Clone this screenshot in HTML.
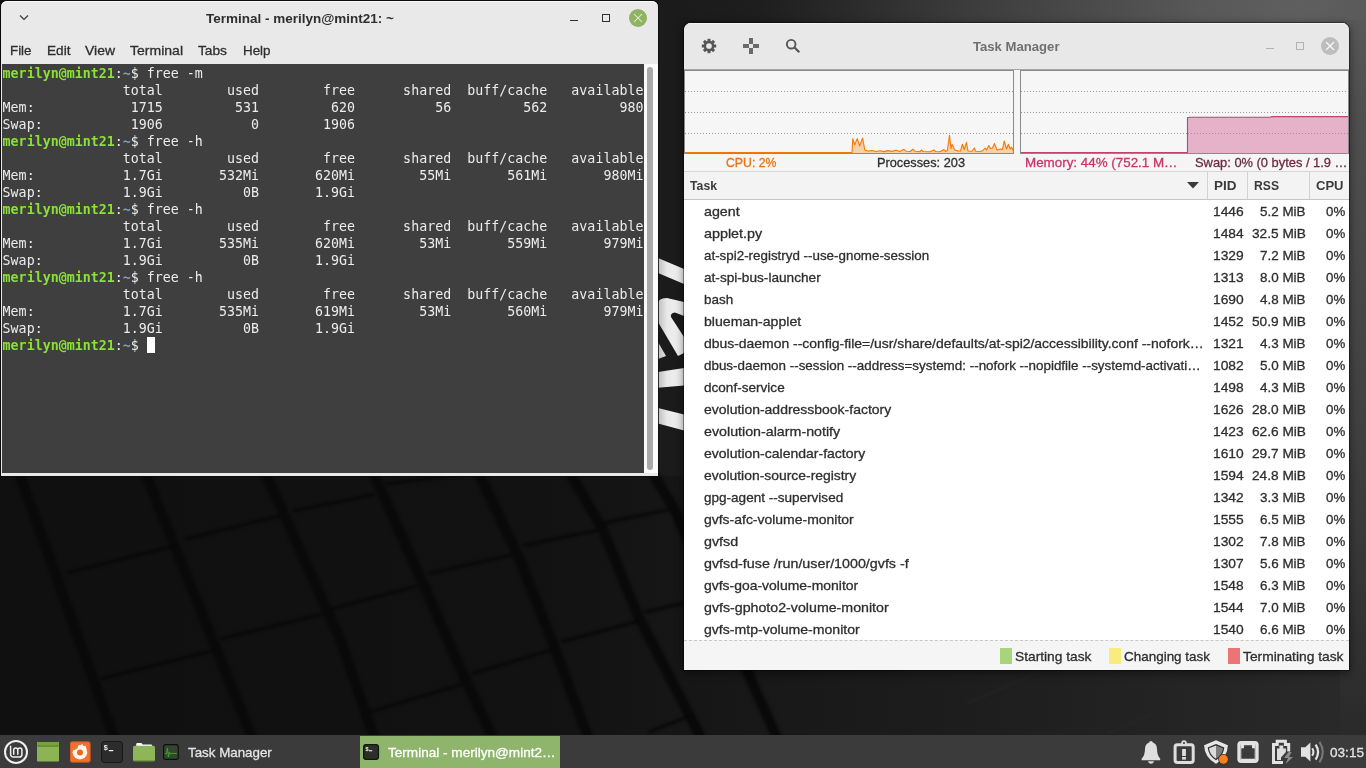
<!DOCTYPE html>
<html lang="en">
<head>
<meta charset="utf-8">
<title>Desktop</title>
<style>
*{box-sizing:border-box;margin:0;padding:0}
html,body{width:1366px;height:768px;overflow:hidden;background:#111}
body{position:relative;font-family:"Liberation Sans",sans-serif;font-size:14px;color:#2e2e2e}
.a{position:absolute}
.t{position:absolute;white-space:pre;line-height:1;transform-origin:0 0;-webkit-text-stroke:0.3px}
#txt{position:absolute;left:0;top:0;width:1366px;height:768px;will-change:transform}
#wall{position:absolute;left:0;top:0;width:1366px;height:768px}
#ico{position:absolute;left:0;top:0;width:1366px;height:768px;will-change:transform}
/* terminal window */
#term{position:absolute;left:1px;top:1px;width:657px;height:474.5px;background:#e9e9e9;border-radius:6px 6px 0 0;box-shadow:0 0 0 1px rgba(10,10,10,.8),inset 0 1px 0 #fafafa}
#tbg{position:absolute;left:2px;top:64px;width:642px;height:409px;background:#3f3f3f}
#tbody{position:absolute;left:2px;top:64px;width:642px;height:409px;will-change:transform;color:#ececec;font-family:"DejaVu Sans Mono","Liberation Mono",monospace;font-size:13.288px;line-height:17px;white-space:pre;padding:1.2px 0 0 0.6px;letter-spacing:0.024px;overflow:hidden}
#tbody b{color:#8ae234;font-weight:bold}
#tbody i{color:#7c9fc9;font-style:normal;font-weight:bold}
#tbody .cur{display:inline-block;width:8px;height:16px;background:#fff;vertical-align:top}
#tscroll{position:absolute;left:644px;top:64px;width:14px;height:409px;background:#fbfbfb}
#tscroll div{position:absolute;left:3px;top:3px;width:6px;height:403px;border-radius:3px;background:#a9a9a9}
/* task manager */
#tm{position:absolute;left:684px;top:23px;width:665px;height:647px;background:#f5f5f5;border-radius:7px 7px 0 0;overflow:hidden;box-shadow:0 0 0 1px rgba(0,0,0,.4),0 2px 9px 1px rgba(0,0,0,.45)}
#tm .hdr{position:absolute;left:0;top:0;width:100%;height:47px;background:#e8e8e8;border-bottom:1px solid #a6a6a6;box-shadow:inset 0 1px 0 #f6f6f6}
.graph{position:absolute;top:70px;height:84px;background:#f6f6f6;border:1px solid #8a8a8a}
#th{position:absolute;left:684px;top:171px;width:665px;height:29px;background:#f3f3f3;border-top:1px solid #d6d6d6;border-bottom:1px solid #c4c4c4}
.sep{position:absolute;top:172px;width:1px;height:27px;background:#d2d2d2}
#rows{position:absolute;left:684px;top:200px;width:665px;height:441px;background:#fff}
#ft{position:absolute;left:684px;top:640px;width:665px;height:30px;background:#f5f5f5;border-top:1px dashed #c8c8c8}
/* panel */
#panel{position:absolute;left:0;top:735px;width:1366px;height:33px;background:#3b3b3b}
</style>
</head>
<body>
<svg id="wall" viewBox="0 0 1366 768">
<defs>
<linearGradient id="gC" x1="658" x2="1366" y1="0" y2="0" gradientUnits="userSpaceOnUse">
<stop offset="0" stop-color="#1a1a1a"/><stop offset=".144" stop-color="#1e1e1e"/><stop offset=".285" stop-color="#2c2c2c"/><stop offset=".435" stop-color="#3c3c3c"/><stop offset=".624" stop-color="#4c4c4c"/><stop offset=".765" stop-color="#585858"/><stop offset=".907" stop-color="#5f5f5f"/><stop offset="1" stop-color="#5a5a5a"/>
</linearGradient>
<linearGradient id="gD" x1="0" x2="0" y1="0" y2="735" gradientUnits="userSpaceOnUse">
<stop offset="0" stop-color="#5a5a5a"/><stop offset=".136" stop-color="#505050"/><stop offset=".326" stop-color="#4a4a4a"/><stop offset=".544" stop-color="#424242"/><stop offset=".748" stop-color="#383838"/><stop offset=".925" stop-color="#2e2e2e"/><stop offset="1" stop-color="#2a2a2a"/>
</linearGradient>
<linearGradient id="gE" x1="0" x2="1366" y1="0" y2="0" gradientUnits="userSpaceOnUse">
<stop offset="0" stop-color="#101010"/><stop offset=".4" stop-color="#121212"/><stop offset=".5" stop-color="#161616"/><stop offset=".73" stop-color="#1e1e1e"/><stop offset="1" stop-color="#2a2a2a"/>
</linearGradient>
<linearGradient id="gS" x1="676" x2="684" y1="0" y2="0" gradientUnits="userSpaceOnUse">
<stop offset="0" stop-color="#000" stop-opacity="0"/><stop offset="1" stop-color="#000" stop-opacity=".45"/>
</linearGradient>
<filter id="bl" color-interpolation-filters="sRGB" x="0" y="0" width="1366" height="768" filterUnits="userSpaceOnUse"><feGaussianBlur stdDeviation="1.8"/></filter>
<linearGradient id="gL" x1="658" x2="684" y1="0" y2="0" gradientUnits="userSpaceOnUse">
<stop offset="0" stop-color="#bdbdbd"/><stop offset=".35" stop-color="#e9e9e9"/><stop offset="1" stop-color="#f4f4f4"/>
</linearGradient>
</defs>
<rect width="1366" height="768" fill="#111"/>
<rect x="0" y="0" width="1366" height="735" fill="url(#gE)"/>
<rect x="658" y="0" width="708" height="60" fill="url(#gC)"/>
<rect x="1340" y="20" width="26" height="715" fill="url(#gD)"/>
<rect x="658" y="0" width="26" height="476" fill="#1b1b1b"/>
<g filter="url(#bl)">
<g fill="none" stroke="#090909" stroke-width="10" stroke-linecap="butt" stroke-linejoin="round">
<path d="M18,470 L115,740"/><path d="M144,470 L253,740"/><path d="M264,470 L340,639 L375,740"/><path d="M372,470 L421,579 L463,674 L494,740"/><path d="M477,470 L516,551 L554,646 L589,740"/><path d="M568,470 L602,528 L639,618 L690,716 L702,740"/><path d="M651,470 L674,509 L760,700 L778,740"/>
</g>
<g fill="none" stroke="#080808" stroke-width="3">
<path d="M67,573 L177,545 M185,539 L279,516 M292,511 L375,494.6 M386,484 L477,472"/>
<path d="M100,679 L215,650 M220,639 L323,614 M331,609 L417,586 M428,573.6 L516,554 M523,545.5 L600,529.7 M605,522.7 L674,508.6"/>
<path d="M368,712.4 L463,684 M472,673.8 L554,649 M561,642 L639,621 M644,612.3 L690,601.8"/>
<path d="M649,731.8 L690,716"/>
</g>
<g fill="none" stroke="#2c2c2c" stroke-width="1.5" opacity=".6">
<path d="M966,704 L1039,672 M1109,733 L1153,714"/>
</g>
</g>
<g fill="url(#gL)">
<path d="M658,258 L684,269 L684,284 L658,273Z"/>
<path d="M658,302 Q660,298 667,298 L684,302 L684,316 L675,312.5 Q670,313 671,317 L684,337 L684,353 L678,356 L658,322Z"/>
<path d="M658,342 L666,356 L658,359Z"/>
<path d="M658,372 L684,368 L684,385.5 L658,387.7Z"/>
<path d="M658,408 L684,414.4 L684,430.5 L658,423.5Z"/>
</g>
</svg>

<div id="term"></div>
<div id="tbg"></div>
<div id="tbody"><b>merilyn@mint21</b>:<i>~</i>$ free -m
               total        used        free      shared  buff/cache   available
Mem:            1715         531         620          56         562         980
Swap:           1906           0        1906
<b>merilyn@mint21</b>:<i>~</i>$ free -h
               total        used        free      shared  buff/cache   available
Mem:           1.7Gi       532Mi       620Mi        55Mi       561Mi       980Mi
Swap:          1.9Gi          0B       1.9Gi
<b>merilyn@mint21</b>:<i>~</i>$ free -h
               total        used        free      shared  buff/cache   available
Mem:           1.7Gi       535Mi       620Mi        53Mi       559Mi       979Mi
Swap:          1.9Gi          0B       1.9Gi
<b>merilyn@mint21</b>:<i>~</i>$ free -h
               total        used        free      shared  buff/cache   available
Mem:           1.7Gi       535Mi       619Mi        53Mi       560Mi       979Mi
Swap:          1.9Gi          0B       1.9Gi
<b>merilyn@mint21</b>:<i>~</i>$ <span class="cur"></span></div>
<div id="tscroll"><div></div></div>

<div id="tm"><div class="hdr"></div></div>
<div class="graph" style="left:684px;width:330px"></div>
<div class="graph" style="left:1020px;width:329px"></div>
<div id="th"></div>
<div class="sep" style="left:1207px"></div><div class="sep" style="left:1247px"></div><div class="sep" style="left:1309px"></div>
<div id="rows"></div>
<div id="ft"></div>
<div class="a" style="left:1000px;top:648px;width:12px;height:16px;background:#a8d47d"></div>
<div class="a" style="left:1109px;top:648px;width:12px;height:16px;background:#f9ec7c"></div>
<div class="a" style="left:1228px;top:648px;width:12px;height:16px;background:#ec7474"></div>

<div id="panel"></div>
<div class="a" style="left:360px;top:736px;width:200px;height:32px;background:#8fb46b"></div>

<svg id="ico" viewBox="0 0 1366 768">
<!-- terminal window controls -->
<path d="M20,15.5 L24,19.5 L28,15.5" fill="none" stroke="#3a3a3a" stroke-width="1.2"/>
<rect x="570" y="20" width="8" height="1" fill="#303030"/>
<rect x="602.5" y="14.5" width="7" height="7" fill="none" stroke="#303030" stroke-width="1"/>
<circle cx="638" cy="18" r="9" fill="#8fb264"/>
<path d="M634,14 L642,22 M642,14 L634,22" stroke="#e6f5d6" stroke-width="1.05" fill="none"/>
<!-- task manager header icons -->
<g transform="translate(709,46)" fill="#555">
<g transform="rotate(0)"><rect x="-1.5" y="-7.2" width="3" height="3.4"/><rect x="-1.5" y="3.8" width="3" height="3.4"/></g><g transform="rotate(45)"><rect x="-1.5" y="-7.2" width="3" height="3.4"/><rect x="-1.5" y="3.8" width="3" height="3.4"/></g><g transform="rotate(90)"><rect x="-1.5" y="-7.2" width="3" height="3.4"/><rect x="-1.5" y="3.8" width="3" height="3.4"/></g><g transform="rotate(135)"><rect x="-1.5" y="-7.2" width="3" height="3.4"/><rect x="-1.5" y="3.8" width="3" height="3.4"/></g>
<circle r="4.1" fill="none" stroke="#555" stroke-width="2.5"/>
</g>
<g fill="#6a6a6a"><rect x="743" y="44" width="6" height="4"/><rect x="753" y="44" width="6" height="4"/><rect x="749" y="38" width="4" height="6"/><rect x="749" y="48" width="4" height="6"/></g>
<circle cx="791.2" cy="44.2" r="4.3" fill="none" stroke="#555" stroke-width="1.9"/><path d="M794.3,47.3 L799.3,52.3" stroke="#555" stroke-width="2.2" fill="none"/>
<rect x="1266" y="48" width="8" height="1" fill="#b2b2b2"/>
<rect x="1296.5" y="42.5" width="7" height="7" fill="none" stroke="#b2b2b2" stroke-width="1"/>
<circle cx="1330" cy="46" r="9" fill="#bdbdbd"/>
<path d="M1326,42 L1334,50 M1334,42 L1326,50" stroke="#f6f6f6" stroke-width="1.3" fill="none"/>
<!-- sort arrow -->
<path d="M1187,182 L1199,182 L1193,188.5Z" fill="#3a3a3a"/>
<!-- graphs -->
<path d="M685,91.5 H1013" stroke="#9a9a9a" stroke-width="1" stroke-dasharray="1 2"/><path d="M685,112.5 H1013" stroke="#9a9a9a" stroke-width="1" stroke-dasharray="1 2"/><path d="M685,133.5 H1013" stroke="#9a9a9a" stroke-width="1" stroke-dasharray="1 2"/><path d="M1021,91.5 H1348" stroke="#9a9a9a" stroke-width="1" stroke-dasharray="1 2"/><path d="M1021,112.5 H1348" stroke="#9a9a9a" stroke-width="1" stroke-dasharray="1 2"/><path d="M1021,133.5 H1348" stroke="#9a9a9a" stroke-width="1" stroke-dasharray="1 2"/><path d="M685,152.5 L852,152.5 L852.8,138.6 L854.7,144.9 L857.2,138.6 L859.7,146 L862.6,138 L864.8,150 L868,151 L872,150.5 L876,151.5 L880,150.8 L884,151.6 L888,150.6 L892,151.4 L896,150.2 L900,151.5 L904,149.3 L906,151.2 L910,151.5 L913,149.2 L915,151.3 L920,151.6 L921.5,150 L923,151.5 L930,151.7 L934,150 L935.5,151.5 L940,151.8 L944,149.5 L945.5,151.5 L947.3,150.5 L949.5,135.4 L951,148.7 L952,144.3 L954.8,150 L958,151 L960.5,151 L962.4,144.3 L964.3,149.5 L966.4,142.4 L968,151 L972,151.3 L974.4,148 L975.5,151.2 L980,151.5 L983,150.5 L985,148 L986.5,150 L988.8,145.5 L990.5,148.5 L992.5,148 L994.5,143.6 L997,150 L999,149.5 L1000.8,149 L1002.5,149.5 L1004.2,141 L1006.5,149 L1008.4,144.3 L1010.2,149 L1011.5,147 L1013,150.5 L1013,153 L685,153Z" fill="#f57900" fill-opacity=".3"/><path d="M685,152.5 L852,152.5 L852.8,138.6 L854.7,144.9 L857.2,138.6 L859.7,146 L862.6,138 L864.8,150 L868,151 L872,150.5 L876,151.5 L880,150.8 L884,151.6 L888,150.6 L892,151.4 L896,150.2 L900,151.5 L904,149.3 L906,151.2 L910,151.5 L913,149.2 L915,151.3 L920,151.6 L921.5,150 L923,151.5 L930,151.7 L934,150 L935.5,151.5 L940,151.8 L944,149.5 L945.5,151.5 L947.3,150.5 L949.5,135.4 L951,148.7 L952,144.3 L954.8,150 L958,151 L960.5,151 L962.4,144.3 L964.3,149.5 L966.4,142.4 L968,151 L972,151.3 L974.4,148 L975.5,151.2 L980,151.5 L983,150.5 L985,148 L986.5,150 L988.8,145.5 L990.5,148.5 L992.5,148 L994.5,143.6 L997,150 L999,149.5 L1000.8,149 L1002.5,149.5 L1004.2,141 L1006.5,149 L1008.4,144.3 L1010.2,149 L1011.5,147 L1013,150.5" fill="none" stroke="#f57900" stroke-width="1.1" stroke-linejoin="round"/>
<path d="M1021,152.5 H1187.5 V117.6 L1190,117.2 L1270,117.2 L1272,116.6 L1348,116.6 V153 H1021Z" fill="#e5b2c9"/>
<path d="M1021,152.5 H1187.5 V117.6 L1190,117.2 L1270,117.2 L1272,116.6 L1348,116.6" fill="none" stroke="#c4406e" stroke-width="1.1"/>
<path d="M1188,133.5 H1348" stroke="#b08a9c" stroke-width="1" stroke-dasharray="1 2"/>
<!-- panel: mint logo -->
<circle cx="16" cy="752" r="11" fill="none" stroke="#f0f0f0" stroke-width="2"/>
<path d="M10.6,746.3 V754.4 a2.7,2.7 0 0 0 2.7,2.7 H19.2 a2.7,2.7 0 0 0 2.7,-2.7 V750 a2.05,2.05 0 0 0 -4.1,0 V754.2 M17.8,750 a2.05,2.05 0 0 0 -4.1,0 V754.2" fill="none" stroke="#f0f0f0" stroke-width="1.5" stroke-linecap="round"/>
<!-- show desktop -->
<rect x="37" y="742" width="22" height="19.5" rx="1" fill="#8db454"/><rect x="37" y="742" width="22" height="4" fill="#76a23f"/><rect x="37.5" y="745.6" width="21" height="1" fill="#4e7d1c"/>
<!-- firefox -->
<rect x="70" y="741.5" width="20.5" height="21" rx="2.2" fill="#f3702f"/>
<rect x="70.5" y="742" width="19.5" height="20" rx="1.8" fill="none" stroke="#c9501a" stroke-width="1" opacity=".55"/>
<circle cx="79.9" cy="752.2" r="7.3" fill="#fff6f0"/>
<circle cx="80" cy="752.4" r="3" fill="#ee6618"/>
<path d="M71.5,743.5 L78.6,743.5 L77.6,748.2 L74.2,750.2 L71.5,749Z" fill="#f3702f"/>
<path d="M80.5,745.2 L82.3,743.9 L83.6,746.4 L85.6,745.6 L86.4,749.5 L83,748.5Z" fill="#fff6f0"/>
<!-- terminal launcher -->
<rect x="101.5" y="741.5" width="21" height="21" rx="3.2" fill="#2c2c2c" stroke="#161616" stroke-width="1"/>
<text x="103.7" y="750.3" font-family="'Liberation Sans',sans-serif" font-weight="bold" font-size="7.2" fill="#f2f2f2">$</text><rect x="108.8" y="750" width="4.4" height="1.2" fill="#f2f2f2"/>
<!-- folder -->
<path d="M136.2,746.5 V744.2 Q136.2,743 137.4,743 H141 Q142,743 142.3,744 L142.5,744.6 H151 Q152.2,744.6 152.2,745.8 V747Z" fill="#fbfbfb"/>
<rect x="133" y="745.8" width="22" height="15.4" rx="1.6" fill="#8db658"/><rect x="133" y="760" width="22" height="1.2" fill="#6e9a3c"/>
<!-- task manager icon -->
<rect x="163.6" y="744.6" width="14.6" height="14.8" rx="2.2" fill="#36452f" stroke="#0c0f0a" stroke-width="1.1"/>
<path d="M165,753.6 H166.6 L167.4,748.3 L168.5,757 L169.3,752 L170.2,754 L171.2,753.4 H177" fill="none" stroke="#27b033" stroke-width="0.95"/>
<!-- active terminal icon -->
<rect x="363.6" y="744.6" width="14.9" height="14.8" rx="2.6" fill="#2b2e2b" stroke="#0d1a04" stroke-width="1.2"/>
<text x="365.4" y="751.2" font-family="'Liberation Sans',sans-serif" font-weight="bold" font-size="5.5" fill="#f2f2f2">$</text><rect x="369" y="750.2" width="3.2" height="1.1" fill="#f2f2f2"/>
<!-- tray: bell -->
<g fill="#dedede">
<path d="M1151,741 Q1152.6,741 1152.9,742.6 Q1156.9,744 1157,749 Q1157.1,755.5 1160.2,758.6 V760.2 H1141.7 V758.6 Q1144.9,755.5 1145,749 Q1145.1,744 1149.1,742.6 Q1149.4,741 1151,741Z"/>
<path d="M1147.9,761.3 H1154.1 Q1153.4,763.7 1151,763.7 Q1148.6,763.7 1147.9,761.3Z"/>
</g>
<!-- clipboard -->
<rect x="1175.1" y="744.7" width="18.1" height="17.7" rx="2.2" fill="none" stroke="#dedede" stroke-width="3"/>
<circle cx="1184" cy="743" r="1.9" fill="#3b3b3b" stroke="#dedede" stroke-width="1.7"/>
<rect x="1182.1" y="749" width="3.8" height="7" fill="#dedede"/><rect x="1182.1" y="757" width="3.8" height="2.6" fill="#dedede"/>
<!-- shield -->
<path d="M1216,740.2 L1227.9,745.2 Q1227.5,757.5 1216,763.8 Q1204.5,757.5 1204.1,745.2Z" fill="#e6e6e6"/>
<path d="M1216,744 L1224.3,747.5 Q1223.6,755.8 1216,760.2 Q1208.4,755.8 1207.7,747.5Z" fill="#2e2e2e"/>
<path d="M1216,745.4 L1216,758.8 Q1209.6,754.8 1209,748.3Z" fill="#dcdcdc"/>
<path d="M1216,745.4 L1223,748.3 Q1222.4,754.8 1216,758.8Z" fill="#7d7d7d"/>
<circle cx="1223.4" cy="759.2" r="5.2" fill="#5a1e12"/><circle cx="1223.4" cy="759.2" r="4.5" fill="#f08423"/>
<!-- network -->
<rect x="1238.9" y="742.6" width="18.2" height="18.8" rx="2.4" fill="none" stroke="#e2e2e2" stroke-width="3.1"/>
<path d="M1240.4,744.1 H1255.6 V759.9 H1240.4Z M1241.3,748.3 V758.8 H1254.7 V748.3 H1252 V745.3 H1244 V748.3Z" fill="#e2e2e2" fill-rule="evenodd"/>
<!-- battery -->
<path d="M1283,762.6 H1273.5 V744.5 H1277.2 V741.2 H1285.4 V744.5 H1288.7 V751.5" fill="none" stroke="#e2e2e2" stroke-width="3" stroke-linejoin="miter"/>
<path d="M1277,760 V748.5 H1279.4 V745.5 H1283.2 V748.5 H1285.9 V752 L1281,757.5 V760Z" fill="#dedede"/>
<path d="M1288.6,752 L1284,758 H1288 L1285.6,764 L1293,757 H1289 L1291.6,752Z" fill="#8c8c8c"/>
<!-- volume -->
<path d="M1301,747.2 H1305.3 L1310.4,742.6 V761.6 L1305.3,756.8 H1301Z" fill="#e2e2e2"/>
<path d="M1312.2,748.2 Q1314.6,752 1312.2,755.8" fill="none" stroke="#e2e2e2" stroke-width="2.1"/>
<path d="M1315.6,744.6 Q1320.6,752 1315.6,759.6" fill="none" stroke="#e2e2e2" stroke-width="2.3"/>
<path d="M1319.4,741.8 Q1326.2,752 1319.4,762.4" fill="none" stroke="#777" stroke-width="2.1"/>
</svg>
<div id="txt"><span class="t" style="left:206.0px;top:11.87px;font-size:13.3px;color:#2e2e2e;transform:scaleX(1.0142);font-weight:bold;-webkit-text-stroke:0">Terminal - merilyn@mint21: ~</span>
<span class="t" style="left:9.9px;top:43.77px;font-size:13.5px;color:#2e2e2e;transform:scaleX(0.9878)">File</span>
<span class="t" style="left:46.9px;top:43.77px;font-size:13.5px;color:#2e2e2e;transform:scaleX(1.0101)">Edit</span>
<span class="t" style="left:85.4px;top:43.77px;font-size:13.5px;color:#2e2e2e;transform:scaleX(1.0334)">View</span>
<span class="t" style="left:130.4px;top:43.77px;font-size:13.5px;color:#2e2e2e;transform:scaleX(1.0389)">Terminal</span>
<span class="t" style="left:198.4px;top:43.77px;font-size:13.5px;color:#2e2e2e;transform:scaleX(1.0164)">Tabs</span>
<span class="t" style="left:243.4px;top:43.77px;font-size:13.5px;color:#2e2e2e;transform:scaleX(0.9904)">Help</span>
<span class="t" style="left:972.9px;top:39.87px;font-size:13.3px;color:#707070;transform:scaleX(0.9863);font-weight:bold;-webkit-text-stroke:0">Task Manager</span>
<span class="t" style="left:725.9px;top:155.77px;font-size:13.5px;color:#e8730c;transform:scaleX(0.9094)">CPU: 2%</span>
<span class="t" style="left:877.4px;top:155.77px;font-size:13.5px;color:#2e2e2e;transform:scaleX(0.9456)">Processes: 203</span>
<span class="t" style="left:1024.9px;top:155.77px;font-size:13.5px;color:#cc3368;transform:scaleX(0.9915)">Memory: 44% (752.1 M…</span>
<span class="t" style="left:1194.9px;top:155.77px;font-size:13.5px;color:#6b2b42;transform:scaleX(0.9541)">Swap: 0% (0 bytes / 1.9 …</span>
<span class="t" style="left:690.4px;top:178.87px;font-size:13.3px;color:#3a3a3a;transform:scaleX(0.9206);font-weight:bold;-webkit-text-stroke:0">Task</span>
<span class="t" style="left:1213.9px;top:178.87px;font-size:13.3px;color:#3a3a3a;transform:scaleX(1.0148);font-weight:bold;-webkit-text-stroke:0">PID</span>
<span class="t" style="left:1253.9px;top:178.87px;font-size:13.3px;color:#3a3a3a;transform:scaleX(0.9143);font-weight:bold;-webkit-text-stroke:0">RSS</span>
<span class="t" style="left:1315.9px;top:178.87px;font-size:13.3px;color:#3a3a3a;transform:scaleX(0.9794);font-weight:bold;-webkit-text-stroke:0">CPU</span>
<span class="t" style="left:703.7px;top:204.77px;font-size:13.5px;color:#2e2e2e;transform:scaleX(1.0563)">agent</span>
<span class="t" style="left:1212.7px;top:204.77px;font-size:13.5px;color:#2e2e2e;transform:scaleX(1.0217)">1446</span>
<span class="t" style="left:1260.2px;top:204.77px;font-size:13.5px;color:#2e2e2e;transform:scaleX(0.9939)">5.2 MiB</span>
<span class="t" style="left:1326.2px;top:204.77px;font-size:13.5px;color:#2e2e2e;transform:scaleX(0.9838)">0%</span>
<span class="t" style="left:703.7px;top:226.77px;font-size:13.5px;color:#2e2e2e;transform:scaleX(1.0621)">applet.py</span>
<span class="t" style="left:1212.7px;top:226.77px;font-size:13.5px;color:#2e2e2e;transform:scaleX(1.0217)">1484</span>
<span class="t" style="left:1251.7px;top:226.77px;font-size:13.5px;color:#2e2e2e;transform:scaleX(1.0135)">32.5 MiB</span>
<span class="t" style="left:1326.2px;top:226.77px;font-size:13.5px;color:#2e2e2e;transform:scaleX(0.9838)">0%</span>
<span class="t" style="left:703.7px;top:248.77px;font-size:13.5px;color:#2e2e2e;transform:scaleX(0.9906)">at-spi2-registryd --use-gnome-session</span>
<span class="t" style="left:1212.7px;top:248.77px;font-size:13.5px;color:#2e2e2e;transform:scaleX(1.0217)">1329</span>
<span class="t" style="left:1260.2px;top:248.77px;font-size:13.5px;color:#2e2e2e;transform:scaleX(0.9939)">7.2 MiB</span>
<span class="t" style="left:1326.2px;top:248.77px;font-size:13.5px;color:#2e2e2e;transform:scaleX(0.9838)">0%</span>
<span class="t" style="left:703.7px;top:270.77px;font-size:13.5px;color:#2e2e2e;transform:scaleX(1.0098)">at-spi-bus-launcher</span>
<span class="t" style="left:1212.7px;top:270.77px;font-size:13.5px;color:#2e2e2e;transform:scaleX(1.0217)">1313</span>
<span class="t" style="left:1260.2px;top:270.77px;font-size:13.5px;color:#2e2e2e;transform:scaleX(0.9939)">8.0 MiB</span>
<span class="t" style="left:1326.2px;top:270.77px;font-size:13.5px;color:#2e2e2e;transform:scaleX(0.9838)">0%</span>
<span class="t" style="left:703.7px;top:292.77px;font-size:13.5px;color:#2e2e2e;transform:scaleX(0.9972)">bash</span>
<span class="t" style="left:1212.7px;top:292.77px;font-size:13.5px;color:#2e2e2e;transform:scaleX(1.0217)">1690</span>
<span class="t" style="left:1260.2px;top:292.77px;font-size:13.5px;color:#2e2e2e;transform:scaleX(0.9939)">4.8 MiB</span>
<span class="t" style="left:1326.2px;top:292.77px;font-size:13.5px;color:#2e2e2e;transform:scaleX(0.9838)">0%</span>
<span class="t" style="left:703.7px;top:314.77px;font-size:13.5px;color:#2e2e2e;transform:scaleX(1.0443)">blueman-applet</span>
<span class="t" style="left:1212.7px;top:314.77px;font-size:13.5px;color:#2e2e2e;transform:scaleX(1.0217)">1452</span>
<span class="t" style="left:1251.7px;top:314.77px;font-size:13.5px;color:#2e2e2e;transform:scaleX(1.0135)">50.9 MiB</span>
<span class="t" style="left:1326.2px;top:314.77px;font-size:13.5px;color:#2e2e2e;transform:scaleX(0.9838)">0%</span>
<span class="t" style="left:703.7px;top:336.77px;font-size:13.5px;color:#2e2e2e;transform:scaleX(1.0322)">dbus-daemon --config-file=/usr/share/defaults/at-spi2/accessibility.conf --nofork…</span>
<span class="t" style="left:1212.7px;top:336.77px;font-size:13.5px;color:#2e2e2e;transform:scaleX(1.0217)">1321</span>
<span class="t" style="left:1260.2px;top:336.77px;font-size:13.5px;color:#2e2e2e;transform:scaleX(0.9939)">4.3 MiB</span>
<span class="t" style="left:1326.2px;top:336.77px;font-size:13.5px;color:#2e2e2e;transform:scaleX(0.9838)">0%</span>
<span class="t" style="left:703.7px;top:358.77px;font-size:13.5px;color:#2e2e2e;transform:scaleX(0.9933)">dbus-daemon --session --address=systemd: --nofork --nopidfile --systemd-activati…</span>
<span class="t" style="left:1212.7px;top:358.77px;font-size:13.5px;color:#2e2e2e;transform:scaleX(1.0217)">1082</span>
<span class="t" style="left:1260.2px;top:358.77px;font-size:13.5px;color:#2e2e2e;transform:scaleX(0.9939)">5.0 MiB</span>
<span class="t" style="left:1326.2px;top:358.77px;font-size:13.5px;color:#2e2e2e;transform:scaleX(0.9838)">0%</span>
<span class="t" style="left:703.7px;top:380.77px;font-size:13.5px;color:#2e2e2e;transform:scaleX(1.005)">dconf-service</span>
<span class="t" style="left:1212.7px;top:380.77px;font-size:13.5px;color:#2e2e2e;transform:scaleX(1.0217)">1498</span>
<span class="t" style="left:1260.2px;top:380.77px;font-size:13.5px;color:#2e2e2e;transform:scaleX(0.9939)">4.3 MiB</span>
<span class="t" style="left:1326.2px;top:380.77px;font-size:13.5px;color:#2e2e2e;transform:scaleX(0.9838)">0%</span>
<span class="t" style="left:703.7px;top:402.77px;font-size:13.5px;color:#2e2e2e;transform:scaleX(1.0351)">evolution-addressbook-factory</span>
<span class="t" style="left:1212.7px;top:402.77px;font-size:13.5px;color:#2e2e2e;transform:scaleX(1.0217)">1626</span>
<span class="t" style="left:1251.7px;top:402.77px;font-size:13.5px;color:#2e2e2e;transform:scaleX(1.0135)">28.0 MiB</span>
<span class="t" style="left:1326.2px;top:402.77px;font-size:13.5px;color:#2e2e2e;transform:scaleX(0.9838)">0%</span>
<span class="t" style="left:703.7px;top:424.77px;font-size:13.5px;color:#2e2e2e;transform:scaleX(1.0553)">evolution-alarm-notify</span>
<span class="t" style="left:1212.7px;top:424.77px;font-size:13.5px;color:#2e2e2e;transform:scaleX(1.0217)">1423</span>
<span class="t" style="left:1251.7px;top:424.77px;font-size:13.5px;color:#2e2e2e;transform:scaleX(1.0135)">62.6 MiB</span>
<span class="t" style="left:1326.2px;top:424.77px;font-size:13.5px;color:#2e2e2e;transform:scaleX(0.9838)">0%</span>
<span class="t" style="left:703.7px;top:446.77px;font-size:13.5px;color:#2e2e2e;transform:scaleX(1.0377)">evolution-calendar-factory</span>
<span class="t" style="left:1212.7px;top:446.77px;font-size:13.5px;color:#2e2e2e;transform:scaleX(1.0217)">1610</span>
<span class="t" style="left:1251.7px;top:446.77px;font-size:13.5px;color:#2e2e2e;transform:scaleX(1.0135)">29.7 MiB</span>
<span class="t" style="left:1326.2px;top:446.77px;font-size:13.5px;color:#2e2e2e;transform:scaleX(0.9838)">0%</span>
<span class="t" style="left:703.7px;top:468.77px;font-size:13.5px;color:#2e2e2e;transform:scaleX(1.0297)">evolution-source-registry</span>
<span class="t" style="left:1212.7px;top:468.77px;font-size:13.5px;color:#2e2e2e;transform:scaleX(1.0217)">1594</span>
<span class="t" style="left:1251.7px;top:468.77px;font-size:13.5px;color:#2e2e2e;transform:scaleX(1.0135)">24.8 MiB</span>
<span class="t" style="left:1326.2px;top:468.77px;font-size:13.5px;color:#2e2e2e;transform:scaleX(0.9838)">0%</span>
<span class="t" style="left:703.7px;top:490.77px;font-size:13.5px;color:#2e2e2e;transform:scaleX(1.0026)">gpg-agent --supervised</span>
<span class="t" style="left:1212.7px;top:490.77px;font-size:13.5px;color:#2e2e2e;transform:scaleX(1.0217)">1342</span>
<span class="t" style="left:1260.2px;top:490.77px;font-size:13.5px;color:#2e2e2e;transform:scaleX(0.9939)">3.3 MiB</span>
<span class="t" style="left:1326.2px;top:490.77px;font-size:13.5px;color:#2e2e2e;transform:scaleX(0.9838)">0%</span>
<span class="t" style="left:703.7px;top:512.77px;font-size:13.5px;color:#2e2e2e;transform:scaleX(1.0339)">gvfs-afc-volume-monitor</span>
<span class="t" style="left:1212.7px;top:512.77px;font-size:13.5px;color:#2e2e2e;transform:scaleX(1.0217)">1555</span>
<span class="t" style="left:1260.2px;top:512.77px;font-size:13.5px;color:#2e2e2e;transform:scaleX(0.9939)">6.5 MiB</span>
<span class="t" style="left:1326.2px;top:512.77px;font-size:13.5px;color:#2e2e2e;transform:scaleX(0.9838)">0%</span>
<span class="t" style="left:703.7px;top:534.77px;font-size:13.5px;color:#2e2e2e;transform:scaleX(1.0594)">gvfsd</span>
<span class="t" style="left:1212.7px;top:534.77px;font-size:13.5px;color:#2e2e2e;transform:scaleX(1.0217)">1302</span>
<span class="t" style="left:1260.2px;top:534.77px;font-size:13.5px;color:#2e2e2e;transform:scaleX(0.9939)">7.8 MiB</span>
<span class="t" style="left:1326.2px;top:534.77px;font-size:13.5px;color:#2e2e2e;transform:scaleX(0.9838)">0%</span>
<span class="t" style="left:703.7px;top:556.77px;font-size:13.5px;color:#2e2e2e;transform:scaleX(1.0573)">gvfsd-fuse /run/user/1000/gvfs -f</span>
<span class="t" style="left:1212.7px;top:556.77px;font-size:13.5px;color:#2e2e2e;transform:scaleX(1.0217)">1307</span>
<span class="t" style="left:1260.2px;top:556.77px;font-size:13.5px;color:#2e2e2e;transform:scaleX(0.9939)">5.6 MiB</span>
<span class="t" style="left:1326.2px;top:556.77px;font-size:13.5px;color:#2e2e2e;transform:scaleX(0.9838)">0%</span>
<span class="t" style="left:703.7px;top:578.77px;font-size:13.5px;color:#2e2e2e;transform:scaleX(1.0327)">gvfs-goa-volume-monitor</span>
<span class="t" style="left:1212.7px;top:578.77px;font-size:13.5px;color:#2e2e2e;transform:scaleX(1.0217)">1548</span>
<span class="t" style="left:1260.2px;top:578.77px;font-size:13.5px;color:#2e2e2e;transform:scaleX(0.9939)">6.3 MiB</span>
<span class="t" style="left:1326.2px;top:578.77px;font-size:13.5px;color:#2e2e2e;transform:scaleX(0.9838)">0%</span>
<span class="t" style="left:703.7px;top:600.77px;font-size:13.5px;color:#2e2e2e;transform:scaleX(1.0519)">gvfs-gphoto2-volume-monitor</span>
<span class="t" style="left:1212.7px;top:600.77px;font-size:13.5px;color:#2e2e2e;transform:scaleX(1.0217)">1544</span>
<span class="t" style="left:1260.2px;top:600.77px;font-size:13.5px;color:#2e2e2e;transform:scaleX(0.9939)">7.0 MiB</span>
<span class="t" style="left:1326.2px;top:600.77px;font-size:13.5px;color:#2e2e2e;transform:scaleX(0.9838)">0%</span>
<span class="t" style="left:703.7px;top:622.77px;font-size:13.5px;color:#2e2e2e;transform:scaleX(1.0429)">gvfs-mtp-volume-monitor</span>
<span class="t" style="left:1212.7px;top:622.77px;font-size:13.5px;color:#2e2e2e;transform:scaleX(1.0217)">1540</span>
<span class="t" style="left:1260.2px;top:622.77px;font-size:13.5px;color:#2e2e2e;transform:scaleX(0.9939)">6.6 MiB</span>
<span class="t" style="left:1326.2px;top:622.77px;font-size:13.5px;color:#2e2e2e;transform:scaleX(0.9838)">0%</span>
<span class="t" style="left:1014.9px;top:649.77px;font-size:13.5px;color:#2e2e2e;transform:scaleX(1.0194)">Starting task</span>
<span class="t" style="left:1123.9px;top:649.77px;font-size:13.5px;color:#2e2e2e;transform:scaleX(0.9964)">Changing task</span>
<span class="t" style="left:1242.9px;top:649.77px;font-size:13.5px;color:#2e2e2e;transform:scaleX(1.0224)">Terminating task</span>
<span class="t" style="left:187.9px;top:745.77px;font-size:13.5px;color:#e4e4e4;transform:scaleX(0.9882)">Task Manager</span>
<span class="t" style="left:388.1px;top:745.77px;font-size:13.5px;color:#ffffff;transform:scaleX(1.0052)">Terminal - merilyn@mint2…</span>
<span class="t" style="left:1330.4px;top:745.77px;font-size:13.5px;color:#e4e4e4;transform:scaleX(1.006)">03:15</span></div>
</body>
</html>
